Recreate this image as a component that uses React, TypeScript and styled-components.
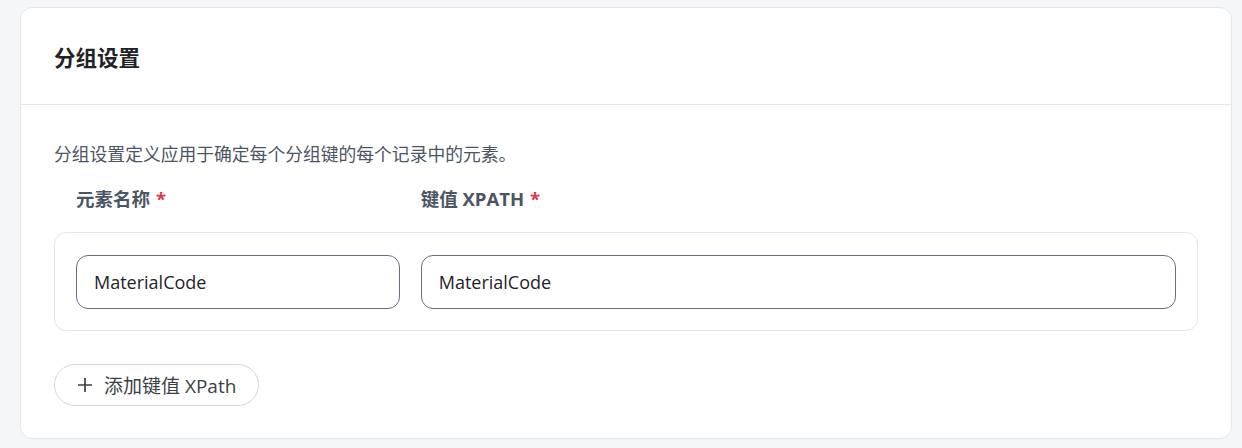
import React, { FC } from "react";
import styled, { createGlobalStyle } from "styled-components";

const GlobalStyle = createGlobalStyle`
  html, body {
    margin: 0;
    padding: 0;
    background: #f5f6f8;
    font-family: "Open Sans", "Noto Sans CJK SC", sans-serif;
  }
`;

const Page = styled.div`
  padding: 7px 10px 9px 20px;
  box-sizing: border-box;
  width: 1242px;
  height: 448px;
`;

const Card = styled.section`
  background: #ffffff;
  border: 1px solid #e3e6ea;
  border-radius: 12px;
  box-sizing: border-box;
  height: 432px;
  display: flex;
  flex-direction: column;
`;

const Header = styled.header`
  padding: 0 33px;
  height: 96px;
  display: flex;
  align-items: center;
  border-bottom: 1px solid #e3e6ea;
`;

const Title = styled.h2`
  margin: 0;
  font-size: 21.5px;
  font-weight: 700;
  color: #1f2328;
  font-family: "Noto Sans CJK SC", sans-serif;
`;

const Body = styled.div`
  padding: 36px 33px 32px;
  display: flex;
  flex-direction: column;
`;

const Description = styled.p`
  margin: 0;
  font-size: 17.8px;
  line-height: 24px;
  color: #4b5563;
  font-family: "Noto Sans CJK SC", sans-serif;
`;

const Columns = styled.div`
  display: grid;
  grid-template-columns: 3fr 7fr;
  column-gap: 21px;
`;

const LabelRow = styled(Columns)`
  padding: 0 22px;
  margin-top: 22px;
`;

const Label = styled.label`
  font-size: 18.5px;
  line-height: 24px;
  font-weight: 700;
  color: #4b5563;
  font-family: "Open Sans", "Noto Sans CJK SC", sans-serif;
`;

const Required = styled.span`
  color: #e0344b;
  margin-left: 6px;
`;

const FieldRow = styled(Columns)`
  margin-top: 21px;
  border: 1px solid #e3e6ea;
  border-radius: 12px;
  padding: 22px 21px 21px 21px;
`;

const Input = styled.input`
  height: 54px;
  box-sizing: border-box;
  border: 1px solid #64707d;
  border-radius: 12px;
  padding: 0 17px;
  font-size: 18px;
  color: #1f2328;
  font-family: "Open Sans", "Noto Sans CJK SC", sans-serif;
  background: #fff;
  outline: none;
  width: 100%;
`;

const AddButton = styled.button`
  margin-top: 33px;
  align-self: flex-start;
  height: 42px;
  padding: 0 22px 0 22px;
  display: flex;
  align-items: center;
  gap: 11px;
  border: 1px solid #d4d7dc;
  border-radius: 21px;
  background: #fff;
  color: #3a3f46;
  font-size: 19px;
  font-family: "Open Sans", "Noto Sans CJK SC", sans-serif;
  cursor: pointer;
`;

const PlusIcon: FC = () => (
  <svg width="16" height="16" viewBox="0 0 16 16" fill="none">
    <path d="M8 1v14M1 8h14" stroke="#3a3f46" strokeWidth="1.7" />
  </svg>
);

const App: FC = () => {
  return (
    <>
      <GlobalStyle />
      <Page>
        <Card>
          <Header>
            <Title>分组设置</Title>
          </Header>
          <Body>
            <Description>
              分组设置定义应用于确定每个分组键的每个记录中的元素。
            </Description>
            <LabelRow>
              <Label>
                元素名称<Required>*</Required>
              </Label>
              <Label>
                键值 XPATH<Required>*</Required>
              </Label>
            </LabelRow>
            <FieldRow>
              <Input defaultValue="MaterialCode" />
              <Input defaultValue="MaterialCode" />
            </FieldRow>
            <AddButton>
              <PlusIcon />
              添加键值 XPath
            </AddButton>
          </Body>
        </Card>
      </Page>
    </>
  );
};

export default App;
